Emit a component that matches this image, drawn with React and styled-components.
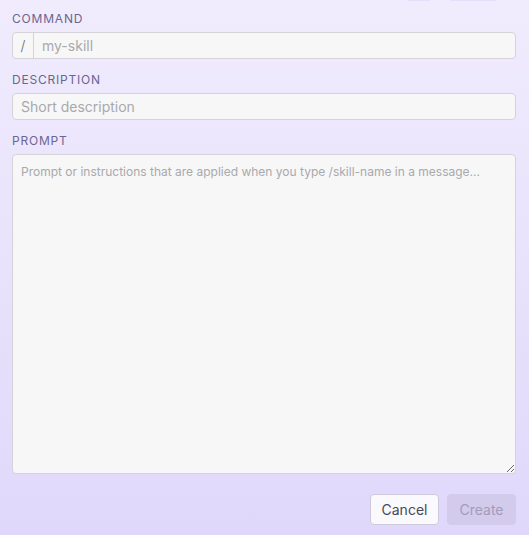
import React from "react";
import styled, { createGlobalStyle } from "styled-components";

const Global = createGlobalStyle`
  html, body { margin: 0; padding: 0; height: 100%; }
  body {
    font-family: Inter, "Noto Sans", "Liberation Sans", sans-serif;
    background: linear-gradient(180deg, #f0ecfd 0%, #e9e3fc 45%, #e0d8fb 100%);
    -webkit-font-smoothing: antialiased;
  }
  #root { height: 100%; }
`;

const Page = styled.div`
  box-sizing: border-box;
  height: 100%;
  display: flex;
  flex-direction: column;
  padding: 11px 13px 10px 12px;
  overflow: hidden;
`;

const TopBar = styled.div`
  display: flex;
  justify-content: flex-end;
  gap: 16px;
  margin: -32px 18px 10px 0;
  height: 22px;
`;

const Chip = styled.div`
  width: ${(p) => p.$w}px;
  height: 22px;
  border-radius: 4px;
  background: #e5dffb;
`;

const Field = styled.div`
  display: flex;
  flex-direction: column;
  gap: 5px;
  margin-bottom: 13px;
`;

const Label = styled.label`
  font-size: 12px;
  line-height: 16px;
  font-weight: 400;
  letter-spacing: 0.8px;
  color: #6b6592;
  text-transform: uppercase;
`;

const InputGroup = styled.div`
  display: flex;
  height: 27px;
  box-sizing: border-box;
  border: 1px solid #d5d3d8;
  border-radius: 4px;
  background: #f7f7f7;
  overflow: hidden;
`;

const Prefix = styled.span`
  width: 20px;
  display: flex;
  align-items: center;
  justify-content: center;
  border-right: 1px solid #d5d3d8;
  color: #6a6870;
  font-size: 14px;
  font-weight: 300;
`;

const Input = styled.input`
  flex: 1;
  min-width: 0;
  border: none;
  outline: none;
  background: transparent;
  padding: 0 8px;
  font-family: inherit;
  font-size: 14px;
  color: #333;
  &::placeholder { color: #a9a9ad; }
`;

const TextArea = styled.textarea`
  box-sizing: border-box;
  height: 320px;
  width: 100%;
  resize: vertical;
  border: 1px solid #d5d3d8;
  border-radius: 4px;
  background: #f7f7f7;
  padding: 9px 8px;
  font-family: inherit;
  font-size: 12px;
  line-height: 16px;
  color: #333;
  outline: none;
  &::placeholder { color: #a9a9ad; }
`;

const Footer = styled.div`
  display: flex;
  justify-content: flex-end;
  gap: 8px;
  margin-top: 7px;
`;

const Button = styled.button`
  box-sizing: border-box;
  width: 69px;
  height: 31px;
  border-radius: 4px;
  font-family: inherit;
  font-size: 14px;
  font-weight: 400;
  cursor: pointer;
  border: 1px solid ${(p) => (p.$primary ? "#d3cbec" : "#cfcadb")};
  background: ${(p) => (p.$primary ? "#d3cbec" : "#faf9fe")};
  color: ${(p) => (p.$primary ? "#a39bba" : "#4a4854")};
`;

export default function App() {
  return (
    <>
      <Global />
      <Page>
        <TopBar>
          <Chip $w={26} />
          <Chip $w={50} />
        </TopBar>
        <Field>
          <Label>Command</Label>
          <InputGroup>
            <Prefix>/</Prefix>
            <Input placeholder="my-skill" />
          </InputGroup>
        </Field>
        <Field>
          <Label>Description</Label>
          <InputGroup>
            <Input placeholder="Short description" />
          </InputGroup>
        </Field>
        <Field>
          <Label>Prompt</Label>
          <TextArea placeholder="Prompt or instructions that are applied when you type /skill-name in a message..." />
        </Field>
        <Footer>
          <Button>Cancel</Button>
          <Button $primary disabled>Create</Button>
        </Footer>
      </Page>
    </>
  );
}
